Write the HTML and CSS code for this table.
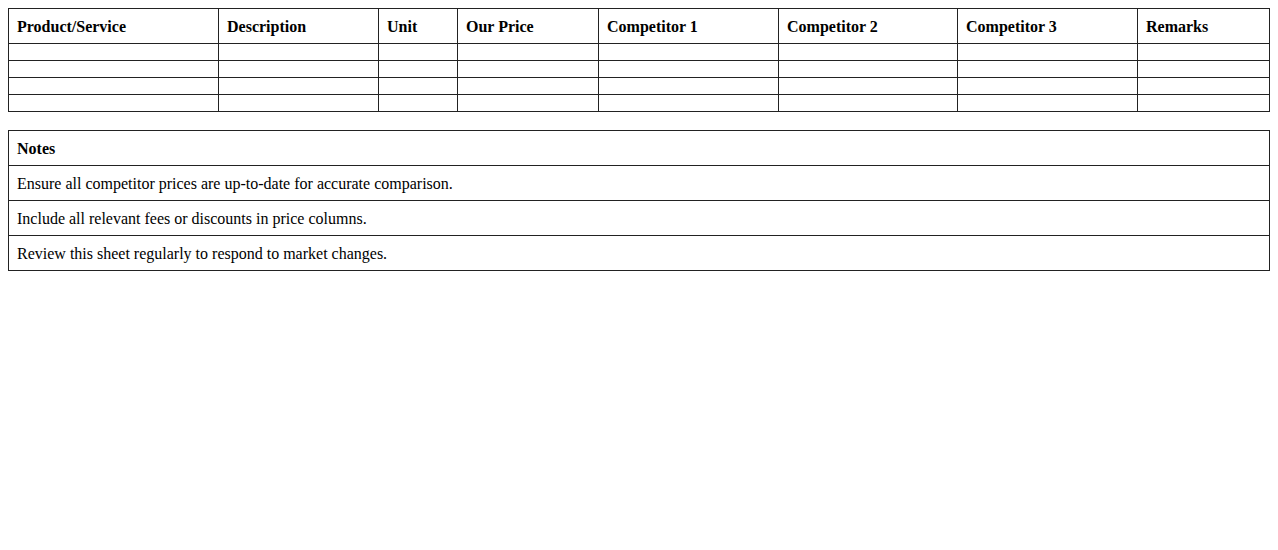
FILE: index.html
```html
<!DOCTYPE html>
<html>
<head>
<meta charset="utf-8">
<link rel="stylesheet" href="styles.css">
</head>
<body>
<table class="grid">
  <colgroup>
    <col class="c1"><col class="c2"><col class="c3"><col class="c4"><col class="c5"><col class="c6"><col class="c7"><col class="c8">
  </colgroup>
  <thead>
    <tr>
      <th>Product/Service</th>
      <th>Description</th>
      <th>Unit</th>
      <th>Our Price</th>
      <th>Competitor 1</th>
      <th>Competitor 2</th>
      <th>Competitor 3</th>
      <th>Remarks</th>
    </tr>
  </thead>
  <tbody>
    <tr><td></td><td></td><td></td><td></td><td></td><td></td><td></td><td></td></tr>
    <tr><td></td><td></td><td></td><td></td><td></td><td></td><td></td><td></td></tr>
    <tr><td></td><td></td><td></td><td></td><td></td><td></td><td></td><td></td></tr>
    <tr><td></td><td></td><td></td><td></td><td></td><td></td><td></td><td></td></tr>
  </tbody>
</table>
<table class="grid notes">
  <thead>
    <tr><th>Notes</th></tr>
  </thead>
  <tbody>
    <tr><td>Ensure all competitor prices are up-to-date for accurate comparison.</td></tr>
    <tr><td>Include all relevant fees or discounts in price columns.</td></tr>
    <tr><td>Review this sheet regularly to respond to market changes.</td></tr>
  </tbody>
</table>
</body>
</html>
```
FILE: styles.css
```css
body {
  margin: 8px;
  font-family: "Liberation Serif", "Times New Roman", serif;
  font-size: 16px;
  color: #000;
  background: #fff;
}
.grid {
  width: 100%;
  border-collapse: collapse;
  table-layout: fixed;
  margin-bottom: 18px;
}
.grid th,
.grid td {
  border: 1px solid #222;
  padding: 9px 8px 7px;
  text-align: left;
  line-height: 18px;
  height: 0;
}
.grid th {
  font-weight: bold;
}
.c1 { width: 210px; }
.c2 { width: 160px; }
.c3 { width: 79px; }
.c4 { width: 141px; }
.c5 { width: 180px; }
.c6 { width: 179px; }
.c7 { width: 180px; }
.c8 { width: auto; }
```
